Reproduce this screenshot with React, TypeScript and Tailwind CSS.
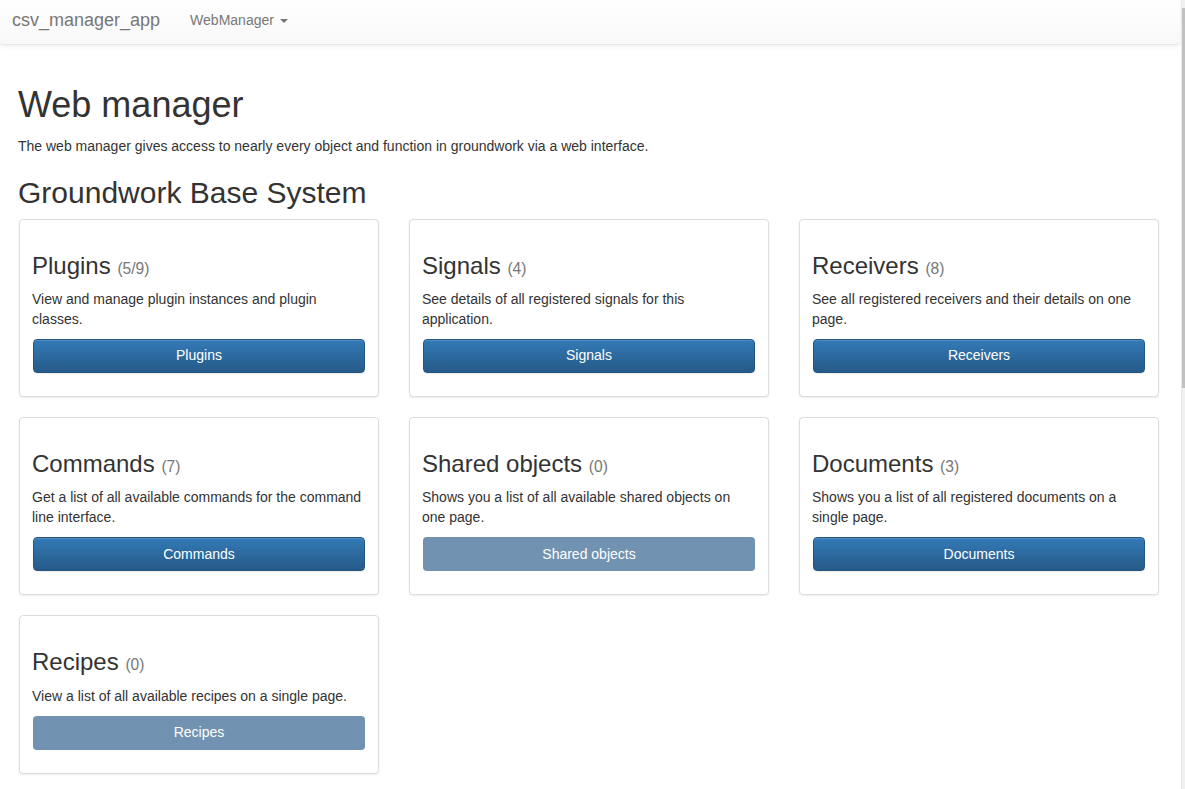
import React from 'react';

interface Section {
  title: string;
  count: string;
  text: string;
  button: string;
  disabled?: boolean;
}

const sections: Section[] = [
  { title: 'Plugins', count: '(5/9)', text: 'View and manage plugin instances and plugin classes.', button: 'Plugins' },
  { title: 'Signals', count: '(4)', text: 'See details of all registered signals for this application.', button: 'Signals' },
  { title: 'Receivers', count: '(8)', text: 'See all registered receivers and their details on one page.', button: 'Receivers' },
  { title: 'Commands', count: '(7)', text: 'Get a list of all available commands for the command line interface.', button: 'Commands' },
  { title: 'Shared objects', count: '(0)', text: 'Shows you a list of all available shared objects on one page.', button: 'Shared objects', disabled: true },
  { title: 'Documents', count: '(3)', text: 'Shows you a list of all registered documents on a single page.', button: 'Documents' },
  { title: 'Recipes', count: '(0)', text: 'View a list of all available recipes on a single page.', button: 'Recipes', disabled: true },
];

const Card: React.FC<{ s: Section }> = ({ s }) => (
  <div className="border border-[#ddd] rounded-[4px] p-[4px] bg-white shadow-[0_1px_2px_rgba(0,0,0,0.075)]">
    <div className="pl-[8px] pr-[9px] py-[9px]">
      <h3 className="mt-[20px] mb-[10px] text-[24px] leading-[1.1] text-[#333]">
        {s.title} <small className="text-[15.6px] text-[#777]">{s.count}</small>
      </h3>
      <p className="mb-[10px] leading-[20px]">{s.text}</p>
      <div className="mb-[10px] ml-[1px]">
        {s.disabled ? (
          <div className="h-[34px] flex items-center justify-center rounded-[4px] border border-[#245580]/65 bg-[#265a88] opacity-65 text-white">
            {s.button}
          </div>
        ) : (
          <div className="h-[34px] flex items-center justify-center rounded-[4px] border border-[#245580] bg-linear-to-b from-[#337ab7] to-[#265a88] text-white shadow-[inset_0_1px_0_rgba(255,255,255,0.15),0_1px_1px_rgba(0,0,0,0.075)]">
            {s.button}
          </div>
        )}
      </div>
    </div>
  </div>
);

export default function App() {
  return (
    <div className="flex w-[1185px] h-[789px] overflow-hidden bg-white text-[14px] text-[#333] font-['Liberation_Sans',Arial,sans-serif]">
      <div className="flex-1 min-w-0">
        {/* navbar */}
        <div className="h-[45px] mr-[1px] flex items-start pt-[9px] rounded-[4px] border-b border-[#e7e7e7] bg-linear-to-b from-white to-[#f8f8f8] shadow-[inset_0_1px_0_rgba(255,255,255,0.15),0_1px_5px_rgba(0,0,0,0.075)]">
          <span className="ml-[12px] text-[18px] leading-[22px] text-[#777]">csv_manager_app</span>
          <span className="ml-[30px] mt-[1px] flex items-center leading-[20px] text-[#777]">
            WebManager
            <span className="ml-[6px] mt-[1px] w-0 h-0 border-l-[4px] border-r-[4px] border-t-[4px] border-l-transparent border-r-transparent border-t-[#777]" />
          </span>
        </div>

        <div className="pl-[18px]">
          <h1 className="mt-[40px] mb-[11px] text-[36px] leading-[1.1]">Web manager</h1>
          <p className="leading-[20px]">The web manager gives access to nearly every object and function in groundwork via a web interface.</p>
          <h2 className="mt-[20px] mb-[10px] text-[30px] leading-[1.1]">Groundwork Base System</h2>

          <div className="ml-[1px] grid grid-cols-[360px_360px_360px] gap-x-[30px] gap-y-[20px] items-start">
            {sections.map((s) => (
              <Card key={s.title} s={s} />
            ))}
          </div>
        </div>
      </div>

      {/* scrollbar */}
      <div className="w-[4px] flex bg-[#f1f1f1]">
        <div className="w-[1px] bg-[#e8e8e8]" />
        <div className="flex-1 flex flex-col">
          <div className="h-[8px]" />
          <div className="h-[380px] bg-[#c1c1c1]" />
        </div>
      </div>
    </div>
  );
}
